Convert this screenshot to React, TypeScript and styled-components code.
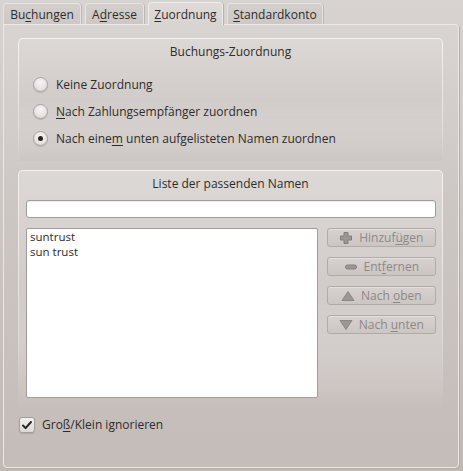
import React from "react";
import styled, { createGlobalStyle } from "styled-components";

const Global = createGlobalStyle`
  html, body { margin: 0; padding: 0; }
  body {
    background: linear-gradient(to bottom, #d7d3d1 0%, #cdc7c4 45%, #c2b9b5 100%);
    font-family: "Open Sans", "DejaVu Sans", sans-serif;
    font-size: 12px;
    color: #2e2c2b;
  }
`;

const Window = styled.div`
  width: 463px;
  height: 471px;
  box-sizing: border-box;
  padding: 1px 4px 3px 3px;
  display: flex;
  flex-direction: column;
`;

const TabBar = styled.div`
  display: flex;
  align-items: flex-end;
  gap: 4px;
  height: 23px;
  position: relative;
  z-index: 1;
`;

const Tab = styled.div<{ $active?: boolean; $w: number }>`
  box-sizing: border-box;
  width: ${(p) => p.$w}px;
  height: ${(p) => (p.$active ? 23 : 21)}px;
  margin-bottom: ${(p) => (p.$active ? -1 : 0)}px;
  padding-top: ${(p) => (p.$active ? 3 : 2)}px;
  text-align: center;
  border: 1px solid ${(p) => (p.$active ? "#eeecea" : "#e6e3e1")};
  border-bottom: none;
  border-radius: 4px 4px 0 0;
  background: ${(p) =>
    p.$active
      ? "linear-gradient(to bottom, #dedad8, #d8d4d2)"
      : "linear-gradient(to bottom, #d3cfcd, #cdc8c6)"};
  box-shadow: ${(p) => (p.$active ? "1px 0 0 #b8b2af" : "1px 0 0 #bdb7b4")};
  color: #2e2c2b;
  white-space: nowrap;
`;

const U = styled.span`
  text-decoration: underline;
  text-underline-offset: 2px;
`;

const Panel = styled.div`
  flex: 1;
  box-sizing: border-box;
  border: 1px solid #ebe8e6;
  border-radius: 0 4px 4px 4px;
  box-shadow: 1px 1px 0 #b3aca9;
  background: linear-gradient(to bottom, #d8d4d2 0%, #cdc7c4 40%, #c4bcb8 100%);
  padding: 13px 15px 0 14px;
  display: flex;
  flex-direction: column;
`;

const GroupBox = styled.div<{ $h: number; $gap?: number }>`
  box-sizing: border-box;
  height: ${(p) => p.$h}px;
  margin-top: ${(p) => p.$gap ?? 0}px;
  border: 1px solid transparent;
  border-bottom: none;
  border-radius: 5px 5px 0 0;
  background:
    linear-gradient(to bottom, #dcd8d6 0%, #d1ccca 50%, rgba(200, 192, 189, 0.4) 100%) padding-box,
    linear-gradient(to bottom, #f4f2f1 0%, rgba(240, 237, 236, 0.6) 70%, rgba(240, 237, 236, 0) 100%) border-box;
  display: flex;
  flex-direction: column;
`;

const GroupTitle = styled.div`
  text-align: center;
  height: 16px;
  line-height: 16px;
  margin-top: 5px;
`;

const RadioList = styled.div`
  display: flex;
  flex-direction: column;
  gap: 12px;
  padding: 17px 0 0 14px;
`;

const OptionRow = styled.label`
  display: flex;
  align-items: center;
  gap: 8px;
  height: 15px;
  white-space: nowrap;
`;

const RadioDot = styled.span<{ $checked?: boolean }>`
  box-sizing: border-box;
  width: 15px;
  height: 15px;
  border-radius: 50%;
  border: 1px solid #a9a3a0;
  background: radial-gradient(circle at 50% 35%, #f6f5f4 0%, #e6e3e1 60%, #d6d2d0 100%);
  box-shadow: 0 1px 1px rgba(0, 0, 0, 0.12);
  display: flex;
  align-items: center;
  justify-content: center;
  &::after {
    content: "";
    width: 5px;
    height: 5px;
    border-radius: 50%;
    background: #262524;
    display: ${(p) => (p.$checked ? "block" : "none")};
  }
`;

const ListArea = styled.div`
  display: flex;
  flex-direction: column;
  padding: 0 6px 0 7px;
`;

const TextInput = styled.div`
  box-sizing: border-box;
  margin-top: 8px;
  height: 18px;
  background: #fff;
  border: 1px solid #a29c99;
  border-radius: 3px;
  box-shadow: inset 0 1px 1px rgba(0, 0, 0, 0.08);
`;

const ListRow = styled.div`
  display: flex;
  gap: 9px;
  margin-top: 10px;
`;

const NameList = styled.div`
  box-sizing: border-box;
  width: 293px;
  height: 170px;
  background: #fff;
  border: 1px solid #a29c99;
  border-radius: 2px;
  padding: 0 3px;
  display: flex;
  flex-direction: column;
`;

const NameItem = styled.div`
  height: 15px;
  line-height: 15px;
  font-size: 11.5px;
`;

const ButtonColumn = styled.div`
  display: flex;
  flex-direction: column;
  gap: 10px;
  width: 110px;
`;

const DisabledButton = styled.div`
  box-sizing: border-box;
  height: 19px;
  border: 1px solid #b1aaa7;
  border-radius: 3px;
  background: linear-gradient(to bottom, #d6d1cf, #ccc6c3);
  box-shadow: 0 1px 0 rgba(255, 255, 255, 0.35) inset;
  color: #8e8886;
  display: flex;
  align-items: center;
  justify-content: center;
  gap: 6px;
  white-space: nowrap;
`;

const CheckRow = styled.label`
  display: flex;
  align-items: center;
  gap: 7px;
  margin-top: 10px;
  padding-left: 1px;
`;

const CheckBox = styled.span`
  box-sizing: border-box;
  width: 16px;
  height: 16px;
  border: 1px solid #a49e9b;
  border-radius: 3px;
  background: linear-gradient(to bottom, #f3f1f0, #dcd8d6);
  box-shadow: 0 1px 1px rgba(0, 0, 0, 0.12);
  display: flex;
  align-items: center;
  justify-content: center;
`;

const iconFill = "#9c9694";
const iconStroke = "#827c7a";

const PlusIcon = () => (
  <svg width="14" height="14" viewBox="0 0 14 14">
    <path
      d="M5 1.5h4v3.5h3.5v4H9v3.5H5V9H1.5V5H5z"
      fill={iconFill}
      stroke={iconStroke}
      strokeWidth="1"
      strokeLinejoin="round"
    />
  </svg>
);

const MinusIcon = () => (
  <svg width="14" height="14" viewBox="0 0 14 14">
    <rect x="1.5" y="5" width="11" height="4" rx="2" fill={iconFill} stroke={iconStroke} strokeWidth="1" />
  </svg>
);

const UpIcon = () => (
  <svg width="14" height="14" viewBox="0 0 14 14">
    <path d="M7 2.5L13 11.5H1z" fill={iconFill} stroke={iconStroke} strokeWidth="0.8" strokeLinejoin="round" />
  </svg>
);

const DownIcon = () => (
  <svg width="14" height="14" viewBox="0 0 14 14">
    <path d="M1 2.5h12L7 11.5z" fill={iconFill} stroke={iconStroke} strokeWidth="0.8" strokeLinejoin="round" />
  </svg>
);

const CheckMark = () => (
  <svg width="12" height="12" viewBox="0 0 12 12">
    <path d="M2 6.5l2.6 2.6L10 3" fill="none" stroke="#262524" strokeWidth="2" strokeLinecap="round" strokeLinejoin="round" />
  </svg>
);

export default function App() {
  return (
    <>
      <Global />
      <Window>
        <TabBar>
          <Tab $w={78}>
            Bu<U>c</U>hungen
          </Tab>
          <Tab $w={59}>
            A<U>d</U>resse
          </Tab>
          <Tab $w={75} $active>
            <U>Z</U>uordnung
          </Tab>
          <Tab $w={96}>
            <U>S</U>tandardkonto
          </Tab>
        </TabBar>
        <Panel>
          <GroupBox $h={123}>
            <GroupTitle>Buchungs-Zuordnung</GroupTitle>
            <RadioList>
              <OptionRow>
                <RadioDot />
                Keine Zuordnung
              </OptionRow>
              <OptionRow>
                <RadioDot />
                <span>
                  <U>N</U>ach Zahlungsempfänger zuordnen
                </span>
              </OptionRow>
              <OptionRow>
                <RadioDot $checked />
                <span>
                  Nach eine<U>m</U> unten aufgelisteten Namen zuordnen
                </span>
              </OptionRow>
            </RadioList>
          </GroupBox>
          <GroupBox $h={236} $gap={9}>
            <GroupTitle>Liste der passenden Namen</GroupTitle>
            <ListArea>
              <TextInput />
              <ListRow>
                <NameList>
                  <NameItem>suntrust</NameItem>
                  <NameItem>sun trust</NameItem>
                </NameList>
                <ButtonColumn>
                  <DisabledButton>
                    <PlusIcon />
                    <span>
                      Hinzuf<U>ü</U>gen
                    </span>
                  </DisabledButton>
                  <DisabledButton>
                    <MinusIcon />
                    <span>
                      Ent<U>f</U>ernen
                    </span>
                  </DisabledButton>
                  <DisabledButton>
                    <UpIcon />
                    <span>
                      Nach <U>o</U>ben
                    </span>
                  </DisabledButton>
                  <DisabledButton>
                    <DownIcon />
                    <span>
                      Nach <U>u</U>nten
                    </span>
                  </DisabledButton>
                </ButtonColumn>
              </ListRow>
            </ListArea>
          </GroupBox>
          <CheckRow>
            <CheckBox>
              <CheckMark />
            </CheckBox>
            <span>
              Gro<U>ß</U>/Klein ignorieren
            </span>
          </CheckRow>
        </Panel>
      </Window>
    </>
  );
}
